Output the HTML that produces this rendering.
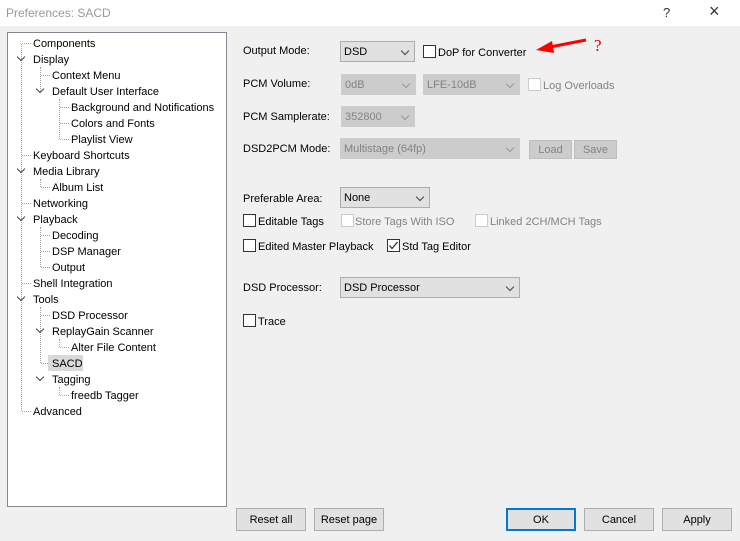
<!DOCTYPE html>
<html><head><meta charset="utf-8"><style>
*{margin:0;padding:0;box-sizing:border-box}
body{width:740px;height:541px;background:#f0f0f0;font-family:"Liberation Sans",sans-serif;font-size:11px;color:#000;position:relative;overflow:hidden}
.a{position:absolute;white-space:nowrap}
.t{position:absolute;line-height:14px;white-space:nowrap;margin-top:1px}
.cb{position:absolute;width:13px;height:13px;border:1px solid #333;background:#fff}
.cb.d{border-color:#cccccc}
.cmb{position:absolute;border:1px solid #adadad;background:#e1e1e1;height:21px;padding:4px 0 0 3px}
.cmb.d{border-color:#cccccc;background:#cccccc;color:#838383}
.cmb:after{content:"";position:absolute;right:6px;top:6px;width:5px;height:5px;border-right:1px solid #444;border-bottom:1px solid #444;transform:rotate(45deg)}
.cmb.d:after{border-color:#999}
.btn{position:absolute;border:1px solid #adadad;background:#e1e1e1;text-align:center;height:23px;line-height:22px}
.btn.d{border-color:#bfbfbf;background:#cccccc;color:#838383;height:19px;line-height:18px}
.g{color:#838383}
.hl{position:absolute;height:1px;border-top:1px dotted #a0a0a0}
.vl{position:absolute;width:1px;border-left:1px dotted #a0a0a0}
.ch{position:absolute;width:6px;height:6px;border-right:1.5px solid #444;border-bottom:1.5px solid #444;transform:rotate(45deg)}
</style></head><body>
<div class="a" style="left:0;top:0;width:740px;height:26px;background:#fff"></div>
<div class="a" style="left:6px;top:6px;color:#999;font-size:12px">Preferences: SACD</div>
<div class="a" style="left:663px;top:5px;color:#333;font-size:13px">?</div>
<div class="a" style="left:709px;top:1px;color:#333;font-size:18px">×</div>

<div class="a" style="left:7px;top:32px;width:220px;height:475px;background:#fff;border:1px solid #828790"></div>
<div class="vl" style="left:21px;top:44px;height:367px"></div>
<div class="vl" style="left:40px;top:67px;height:24px"></div>
<div class="vl" style="left:59px;top:99px;height:40px"></div>
<div class="vl" style="left:40px;top:179px;height:8px"></div>
<div class="vl" style="left:40px;top:227px;height:40px"></div>
<div class="vl" style="left:40px;top:307px;height:56px"></div>
<div class="vl" style="left:59px;top:339px;height:8px"></div>
<div class="vl" style="left:59px;top:387px;height:8px"></div>
<div class="hl" style="left:22px;top:43px;width:9px"></div>
<div class="hl" style="left:41px;top:75px;width:9px"></div>
<div class="hl" style="left:60px;top:107px;width:9px"></div>
<div class="hl" style="left:60px;top:123px;width:9px"></div>
<div class="hl" style="left:60px;top:139px;width:9px"></div>
<div class="hl" style="left:22px;top:155px;width:9px"></div>
<div class="hl" style="left:41px;top:187px;width:9px"></div>
<div class="hl" style="left:22px;top:203px;width:9px"></div>
<div class="hl" style="left:41px;top:235px;width:9px"></div>
<div class="hl" style="left:41px;top:251px;width:9px"></div>
<div class="hl" style="left:41px;top:267px;width:9px"></div>
<div class="hl" style="left:22px;top:283px;width:9px"></div>
<div class="hl" style="left:41px;top:315px;width:9px"></div>
<div class="hl" style="left:60px;top:347px;width:9px"></div>
<div class="hl" style="left:41px;top:363px;width:9px"></div>
<div class="hl" style="left:60px;top:395px;width:9px"></div>
<div class="hl" style="left:22px;top:411px;width:9px"></div>
<div class="ch" style="left:18px;top:54px"></div>
<div class="ch" style="left:37px;top:86px"></div>
<div class="ch" style="left:18px;top:166px"></div>
<div class="ch" style="left:18px;top:214px"></div>
<div class="ch" style="left:18px;top:294px"></div>
<div class="ch" style="left:37px;top:326px"></div>
<div class="ch" style="left:37px;top:374px"></div>
<div class="a" style="left:48px;top:355px;width:35px;height:16px;background:#d9d9d9"></div>
<div class="t" style="left:33px;top:36px">Components</div>
<div class="t" style="left:33px;top:52px">Display</div>
<div class="t" style="left:52px;top:68px">Context Menu</div>
<div class="t" style="left:52px;top:84px">Default User Interface</div>
<div class="t" style="left:71px;top:100px">Background and Notifications</div>
<div class="t" style="left:71px;top:116px">Colors and Fonts</div>
<div class="t" style="left:71px;top:132px">Playlist View</div>
<div class="t" style="left:33px;top:148px">Keyboard Shortcuts</div>
<div class="t" style="left:33px;top:164px">Media Library</div>
<div class="t" style="left:52px;top:180px">Album List</div>
<div class="t" style="left:33px;top:196px">Networking</div>
<div class="t" style="left:33px;top:212px">Playback</div>
<div class="t" style="left:52px;top:228px">Decoding</div>
<div class="t" style="left:52px;top:244px">DSP Manager</div>
<div class="t" style="left:52px;top:260px">Output</div>
<div class="t" style="left:33px;top:276px">Shell Integration</div>
<div class="t" style="left:33px;top:292px">Tools</div>
<div class="t" style="left:52px;top:308px">DSD Processor</div>
<div class="t" style="left:52px;top:324px">ReplayGain Scanner</div>
<div class="t" style="left:71px;top:340px">Alter File Content</div>
<div class="t" style="left:52px;top:356px">SACD</div>
<div class="t" style="left:52px;top:372px">Tagging</div>
<div class="t" style="left:71px;top:388px">freedb Tagger</div>
<div class="t" style="left:33px;top:404px">Advanced</div>

<div class="t" style="left:243px;top:43px">Output Mode:</div>
<div class="cmb" style="left:340px;top:41px;width:75px">DSD</div>
<div class="cb" style="left:423px;top:45px"></div>
<div class="t" style="left:438px;top:45px">DoP for Converter</div>
<svg class="a" style="left:532px;top:36px" width="56" height="20"><path d="M54 4 L18 11" stroke="#f00" stroke-width="3"/><path d="M4 14 L20 5 L22 17 Z" fill="#f00"/></svg>
<div class="a" style="left:594px;top:36px;color:#e00;font-family:'Liberation Serif',serif;font-size:17px">?</div>

<div class="t" style="left:243px;top:76px">PCM Volume:</div>
<div class="cmb d" style="left:341px;top:74px;width:75px">0dB</div>
<div class="cmb d" style="left:423px;top:74px;width:97px">LFE-10dB</div>
<div class="cb d" style="left:528px;top:78px"></div>
<div class="t g" style="left:543px;top:78px">Log Overloads</div>

<div class="t" style="left:243px;top:109px">PCM Samplerate:</div>
<div class="cmb d" style="left:341px;top:106px;width:74px">352800</div>

<div class="t" style="left:243px;top:141px">DSD2PCM Mode:</div>
<div class="cmb d" style="left:340px;top:138px;width:180px">Multistage (64fp)</div>
<div class="btn d" style="left:529px;top:140px;width:43px">Load</div>
<div class="btn d" style="left:574px;top:140px;width:43px">Save</div>

<div class="t" style="left:243px;top:191px">Preferable Area:</div>
<div class="cmb" style="left:340px;top:187px;width:90px">None</div>

<div class="cb" style="left:243px;top:214px"></div>
<div class="t" style="left:258px;top:214px">Editable Tags</div>
<div class="cb d" style="left:341px;top:214px"></div>
<div class="t g" style="left:355px;top:214px">Store Tags With ISO</div>
<div class="cb d" style="left:475px;top:214px"></div>
<div class="t g" style="left:490px;top:214px">Linked 2CH/MCH Tags</div>

<div class="cb" style="left:243px;top:239px"></div>
<div class="t" style="left:258px;top:239px">Edited Master Playback</div>
<div class="cb" style="left:387px;top:239px"></div>
<svg class="a" style="left:387px;top:239px" width="13" height="13"><path d="M2.5 6.5 L5 9.5 L10.5 3" stroke="#333" stroke-width="1.3" fill="none"/></svg>
<div class="t" style="left:402px;top:239px">Std Tag Editor</div>

<div class="t" style="left:243px;top:280px">DSD Processor:</div>
<div class="cmb" style="left:340px;top:277px;width:180px">DSD Processor</div>

<div class="cb" style="left:243px;top:314px"></div>
<div class="t" style="left:258px;top:314px">Trace</div>

<div class="btn" style="left:236px;top:508px;width:70px">Reset all</div>
<div class="btn" style="left:314px;top:508px;width:70px">Reset page</div>
<div class="btn" style="left:506px;top:508px;width:70px;border:2px solid #0078d7;line-height:20px">OK</div>
<div class="btn" style="left:584px;top:508px;width:70px">Cancel</div>
<div class="btn" style="left:662px;top:508px;width:70px">Apply</div>
</body></html>
